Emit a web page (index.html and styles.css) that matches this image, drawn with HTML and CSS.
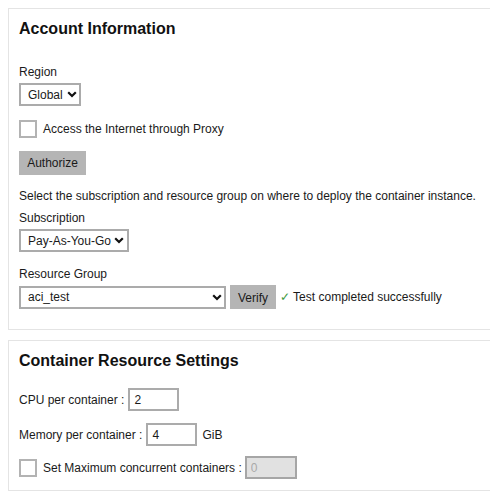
FILE: index.html
```html
<!DOCTYPE html>
<html>
<head>
<meta charset="utf-8">
<link rel="stylesheet" href="styles.css">
</head>
<body>
<section class="panel panel-account">
  <h2 class="title">Account Information</h2>
  <div class="label label-region">Region</div>
  <span class="select-wrap w-global">
    <select class="select"><option>Global</option></select>
    <svg class="chev" width="10" height="7" viewBox="0 0 10 7"><path d="M1.2 1.2 L5 5 L8.8 1.2" fill="none" stroke="#111" stroke-width="2.2"/></svg>
  </span>
  <label class="check-row row-proxy">
    <span class="box"></span>
    <span>Access the Internet through Proxy</span>
  </label>
  <button class="btn btn-auth">Authorize</button>
  <div class="label label-desc">Select the subscription and resource group on where to deploy the container instance.</div>
  <div class="label label-sub">Subscription</div>
  <span class="select-wrap w-sub">
    <select class="select"><option>Pay-As-You-Go</option></select>
    <svg class="chev" width="10" height="7" viewBox="0 0 10 7"><path d="M1.2 1.2 L5 5 L8.8 1.2" fill="none" stroke="#111" stroke-width="2.2"/></svg>
  </span>
  <div class="label label-rg">Resource Group</div>
  <div class="rg-row">
    <span class="select-wrap w-rg">
      <select class="select"><option>aci_test</option></select>
      <svg class="chev" width="10" height="7" viewBox="0 0 10 7"><path d="M1.2 1.2 L5 5 L8.8 1.2" fill="none" stroke="#111" stroke-width="2.2"/></svg>
    </span>
    <button class="btn btn-verify">Verify</button>
    <span class="status"><span class="tick">✓</span> Test completed successfully</span>
  </div>
</section>
<section class="panel panel-container">
  <h2 class="title">Container Resource Settings</h2>
  <div class="field-row row-cpu">
    <span>CPU per container :</span>
    <input class="num" type="text" value="2">
  </div>
  <div class="field-row row-mem">
    <span>Memory per container :</span>
    <input class="num" type="text" value="4">
    <span class="unit">GiB</span>
  </div>
  <label class="check-row row-max">
    <span class="box"></span>
    <span>Set Maximum concurrent containers :</span>
    <input class="num num-disabled" type="text" value="0" disabled>
  </label>
</section>
</body>
</html>
```

FILE: styles.css
```css
html, body {
  margin: 0;
  padding: 0;
  background: #ffffff;
  overflow: hidden;
}
body {
  font-family: "Liberation Sans", Arial, sans-serif;
  font-size: 12px;
  color: #1a1a1a;
  width: 490px;
  height: 500px;
}
.panel {
  margin-left: 8px;
  width: 482px;
  border: 1px solid #e4e4e4;
  border-right: none;
  padding: 0 10px;
  box-sizing: border-box;
}
.panel-account {
  margin-top: 8px;
  padding-bottom: 20px;
}
.panel-container {
  margin-top: 10px;
  padding-bottom: 11px;
}
.title {
  margin: 10px 0 0 0;
  font-size: 16px;
  line-height: 20px;
  font-weight: bold;
  color: #111;
}
.label {
  line-height: 16px;
  height: 16px;
  white-space: nowrap;
}
.label-region { margin-top: 25px; }
.label-desc { margin-top: 13px; }
.label-sub { margin-top: 6px; }
.label-rg { margin-top: 14px; }

.select-wrap {
  position: relative;
  display: block;
  margin-top: 3px;
  height: 23px;
}
.select {
  appearance: none;
  -webkit-appearance: none;
  display: block;
  box-sizing: border-box;
  height: 23px;
  border: 2px solid #ababab;
  border-radius: 0;
  background: #fff;
  font-family: "Liberation Sans", Arial, sans-serif;
  font-size: 12px;
  color: #1a1a1a;
  padding: 0 0 0 7px;
  margin: 0;
  outline: none;
}
.chev {
  position: absolute;
  top: 8px;
}
.w-global .select { width: 62px; }
.w-global .chev { left: 48px; }
.w-sub .select { width: 110px; }
.w-sub .chev { left: 95px; }
.w-rg { margin-top: 0; }
.w-rg .select { width: 207px; }
.w-rg .chev { left: 193px; }

.check-row {
  display: flex;
  align-items: center;
  gap: 6px;
  white-space: nowrap;
}
.box {
  display: inline-block;
  width: 18px;
  height: 18px;
  box-sizing: border-box;
  border: 2px solid #b3b3b3;
  background: #fff;
  flex: none;
}
.row-proxy {
  margin-top: 13px;
  height: 19px;
}
.btn {
  appearance: none;
  border: none;
  border-radius: 0;
  background: #b5b5b5;
  font-family: "Liberation Sans", Arial, sans-serif;
  font-size: 12px;
  color: #1a1a1a;
  padding: 0;
  margin: 0;
  display: block;
}
.btn-auth {
  margin-top: 13px;
  width: 67px;
  height: 24px;
}
.rg-row {
  margin-top: 3px;
  display: flex;
  align-items: center;
  height: 24px;
}
.btn-verify {
  width: 46px;
  height: 24px;
  margin-left: 4px;
  padding-top: 2px;
}
.status {
  margin-left: 4px;
  white-space: nowrap;
}
.tick {
  color: #3f9b3f;
}
.field-row {
  display: flex;
  align-items: center;
  gap: 4px;
  height: 23px;
  white-space: nowrap;
}
.row-cpu { margin-top: 17px; }
.row-mem { margin-top: 12px; }
.num {
  box-sizing: border-box;
  width: 51px;
  height: 23px;
  border: 2px solid #ababab;
  border-radius: 0;
  padding: 0 0 0 4px;
  margin: 0;
  font-family: "Liberation Sans", Arial, sans-serif;
  font-size: 12px;
  color: #1a1a1a;
  background: #fff;
  outline: none;
}
.unit { margin-left: 1px; }
.row-max {
  margin-top: 10px;
  height: 23px;
}
.row-max .num {
  margin-left: -3px;
}
.num-disabled {
  width: 52px;
  background: #e1e1e1;
  border-color: #a6a6a6;
  color: #a9a9a9;
}
```
